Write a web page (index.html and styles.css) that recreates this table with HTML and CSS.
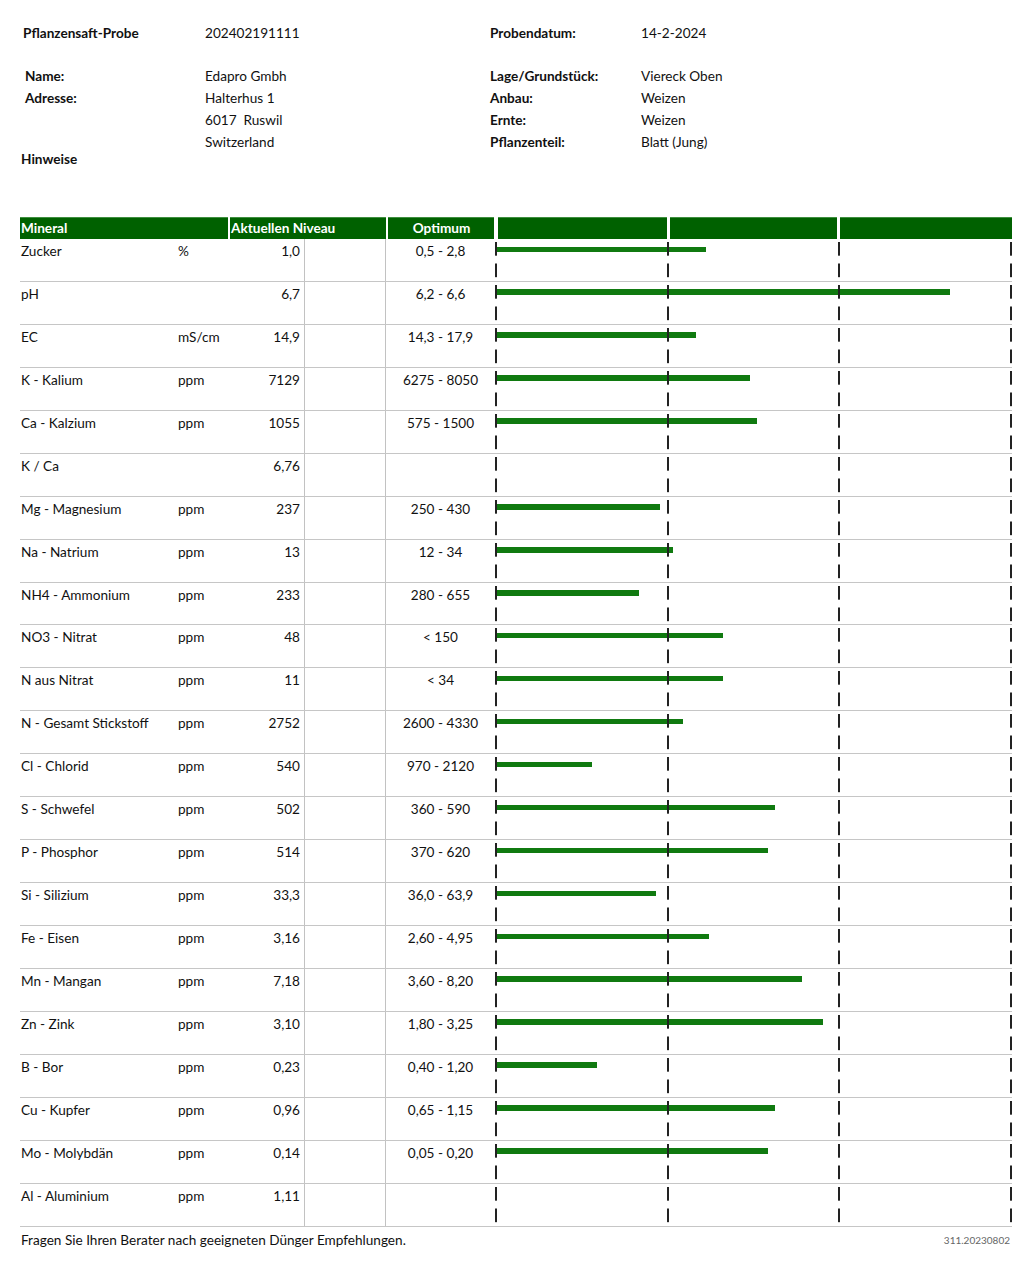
FILE: index.html
```html
<!DOCTYPE html>
<html lang="de">
<head>
    <meta charset="UTF-8">
    <title>Pflanzensaft-Probe 202402191111</title>
    <link rel="stylesheet" href="styles.css">
</head>
<body>
<div class="page">
    <div class="info">
        <div class="lbl first">Pflanzensaft-Probe</div>
        <div>202402191111</div>
        <div class="lbl">Probendatum:</div>
        <div>14-2-2024</div>

        <div class="lbl sub gap">Name:</div>
        <div class="gap">Edapro Gmbh</div>
        <div class="lbl gap">Lage/Grundstück:</div>
        <div class="gap">Viereck Oben</div>

        <div class="lbl sub">Adresse:</div>
        <div>Halterhus 1</div>
        <div class="lbl">Anbau:</div>
        <div>Weizen</div>

        <div></div>
        <div>6017&nbsp; Ruswil</div>
        <div class="lbl">Ernte:</div>
        <div>Weizen</div>

        <div></div>
        <div>Switzerland</div>
        <div class="lbl">Pflanzenteil:</div>
        <div>Blatt (Jung)</div>
    </div>
    <div class="hinweise">Hinweise</div>

    <div class="results">
        <div class="head">
            <div>Mineral</div>
            <div>Aktuellen Niveau</div>
            <div class="center">Optimum</div>
            <div></div>
            <div></div>
            <div></div>
        </div>

        <div class="row"><div>Zucker</div><div>%</div><div class="val">1,0</div><div class="blank"></div><div class="opt">0,5 - 2,8</div><div class="chart"><div class="bar" style="width:210px"></div></div></div>
        <div class="row"><div>pH</div><div></div><div class="val">6,7</div><div class="blank"></div><div class="opt">6,2 - 6,6</div><div class="chart"><div class="bar" style="width:454px"></div></div></div>
        <div class="row"><div>EC</div><div>mS/cm</div><div class="val">14,9</div><div class="blank"></div><div class="opt">14,3 - 17,9</div><div class="chart"><div class="bar" style="width:200px"></div></div></div>
        <div class="row"><div>K - Kalium</div><div>ppm</div><div class="val">7129</div><div class="blank"></div><div class="opt">6275 - 8050</div><div class="chart"><div class="bar" style="width:254px"></div></div></div>
        <div class="row"><div>Ca - Kalzium</div><div>ppm</div><div class="val">1055</div><div class="blank"></div><div class="opt">575 - 1500</div><div class="chart"><div class="bar" style="width:261px"></div></div></div>
        <div class="row"><div>K / Ca</div><div></div><div class="val">6,76</div><div class="blank"></div><div class="opt"></div><div class="chart"></div></div>
        <div class="row"><div>Mg - Magnesium</div><div>ppm</div><div class="val">237</div><div class="blank"></div><div class="opt">250 - 430</div><div class="chart"><div class="bar" style="width:164px"></div></div></div>
        <div class="row"><div>Na - Natrium</div><div>ppm</div><div class="val">13</div><div class="blank"></div><div class="opt">12 - 34</div><div class="chart"><div class="bar" style="width:177px"></div></div></div>
        <div class="row"><div>NH4 - Ammonium</div><div>ppm</div><div class="val">233</div><div class="blank"></div><div class="opt">280 - 655</div><div class="chart"><div class="bar" style="width:143px"></div></div></div>
        <div class="row"><div>NO3 - Nitrat</div><div>ppm</div><div class="val">48</div><div class="blank"></div><div class="opt">&lt; 150</div><div class="chart"><div class="bar" style="width:227px"></div></div></div>
        <div class="row"><div>N aus Nitrat</div><div>ppm</div><div class="val">11</div><div class="blank"></div><div class="opt">&lt; 34</div><div class="chart"><div class="bar" style="width:227px"></div></div></div>
        <div class="row"><div>N - Gesamt Stickstoff</div><div>ppm</div><div class="val">2752</div><div class="blank"></div><div class="opt">2600 - 4330</div><div class="chart"><div class="bar" style="width:187px"></div></div></div>
        <div class="row"><div>Cl - Chlorid</div><div>ppm</div><div class="val">540</div><div class="blank"></div><div class="opt">970 - 2120</div><div class="chart"><div class="bar" style="width:96px"></div></div></div>
        <div class="row"><div>S - Schwefel</div><div>ppm</div><div class="val">502</div><div class="blank"></div><div class="opt">360 - 590</div><div class="chart"><div class="bar" style="width:279px"></div></div></div>
        <div class="row"><div>P - Phosphor</div><div>ppm</div><div class="val">514</div><div class="blank"></div><div class="opt">370 - 620</div><div class="chart"><div class="bar" style="width:272px"></div></div></div>
        <div class="row"><div>Si - Silizium</div><div>ppm</div><div class="val">33,3</div><div class="blank"></div><div class="opt">36,0 - 63,9</div><div class="chart"><div class="bar" style="width:160px"></div></div></div>
        <div class="row"><div>Fe - Eisen</div><div>ppm</div><div class="val">3,16</div><div class="blank"></div><div class="opt">2,60 - 4,95</div><div class="chart"><div class="bar" style="width:213px"></div></div></div>
        <div class="row"><div>Mn - Mangan</div><div>ppm</div><div class="val">7,18</div><div class="blank"></div><div class="opt">3,60 - 8,20</div><div class="chart"><div class="bar" style="width:306px"></div></div></div>
        <div class="row"><div>Zn - Zink</div><div>ppm</div><div class="val">3,10</div><div class="blank"></div><div class="opt">1,80 - 3,25</div><div class="chart"><div class="bar" style="width:327px"></div></div></div>
        <div class="row"><div>B - Bor</div><div>ppm</div><div class="val">0,23</div><div class="blank"></div><div class="opt">0,40 - 1,20</div><div class="chart"><div class="bar" style="width:101px"></div></div></div>
        <div class="row"><div>Cu - Kupfer</div><div>ppm</div><div class="val">0,96</div><div class="blank"></div><div class="opt">0,65 - 1,15</div><div class="chart"><div class="bar" style="width:279px"></div></div></div>
        <div class="row"><div>Mo - Molybdän</div><div>ppm</div><div class="val">0,14</div><div class="blank"></div><div class="opt">0,05 - 0,20</div><div class="chart"><div class="bar" style="width:272px"></div></div></div>
        <div class="row"><div>Al - Aluminium</div><div>ppm</div><div class="val">1,11</div><div class="blank"></div><div class="opt"></div><div class="chart"></div></div>
    </div>

    <div class="footer">
        <span>Fragen Sie Ihren Berater nach geeigneten Dünger Empfehlungen.</span>
        <span class="version">311.20230802</span>
    </div>
</div>
</body>
</html>
```

FILE: styles.css
```css
body {
    margin: 0;
    padding: 0;
    background-color: white;
    color: #111;
    font-family: Lato, "Open Sans", sans-serif;
    font-size: 13.6px;
}
.page {
    width: 992px;
    padding: 22px 0 0 20px;
}
/* Kopfdaten */
.info {
    display: grid;
    grid-template-columns: 185px 285px 151px 1fr;
    line-height: 22px;
}
.info .lbl {
    font-weight: bold;
}
.info .first {
    padding-left: 3px;
}
.info .sub {
    padding-left: 5px;
}
.info .gap {
    margin-top: 21px;
}
.hinweise {
    font-weight: bold;
    padding-left: 1px;
    line-height: 16px;
    margin-top: -2px;
}
/* Tabelle */
.results {
    margin-top: 50px;
}
.head {
    display: grid;
    grid-template-columns: 208px 156px 106px 171px 168px 1fr;
    column-gap: 2px;
    height: 22px;
    color: white;
    font-weight: bold;
}
.head div {
    background-color: #006100;
    border-top: 1px solid #3f8f3f;
    line-height: 21px;
    padding-left: 1px;
}
.head div:nth-child(4) {
    margin-left: 2px;
}
.head div:nth-child(5),
.head div:nth-child(6) {
    margin-left: 1px;
}
.head .center {
    text-align: center;
}
.row {
    display: grid;
    grid-template-columns: 156px 52px 77px 81px 108px 1fr;
    height: 42.95px;
    box-sizing: border-box;
    border-bottom: 1px solid #c6c6c6;
    line-height: 21.5px;
}
.row > div {
    padding-top: 2px;
}
.row div:first-child {
    padding-left: 1px;
}
.row div:nth-child(2) {
    padding-left: 2px;
}
.row .val {
    text-align: right;
    padding-right: 4px;
    border-right: 1px solid #c2c2c2;
}
.row .blank {
    border-right: 1px solid #c2c2c2;
}
.row .opt {
    text-align: center;
    padding-left: 1px;
}
.row .chart {
    position: relative;
    padding-top: 0;
}
.chart::after {
    content: '';
    position: absolute;
    top: 0;
    left: 0;
    right: 0;
    bottom: 0;
    background-image:
        linear-gradient(to bottom, #222 14px, transparent 14px),
        linear-gradient(to bottom, #222 14px, transparent 14px),
        linear-gradient(to bottom, #222 14px, transparent 14px),
        linear-gradient(to bottom, #222 14px, transparent 14px);
    background-size: 1.5px 21.5px;
    background-repeat: repeat-y;
    background-position: 1px 3px, 173px 3px, 344px 3px, 516px 3px;
}
.bar {
    height: 5.5px;
    margin-top: 7.5px;
    margin-left: 1px;
    background-color: #107a10;
}
.footer {
    display: flex;
    justify-content: space-between;
    align-items: center;
    margin-top: 5px;
    line-height: 16px;
}
.footer span:first-child {
    padding-left: 1px;
}
.version {
    font-size: 10px;
    color: #666;
    padding-right: 2px;
}
```
